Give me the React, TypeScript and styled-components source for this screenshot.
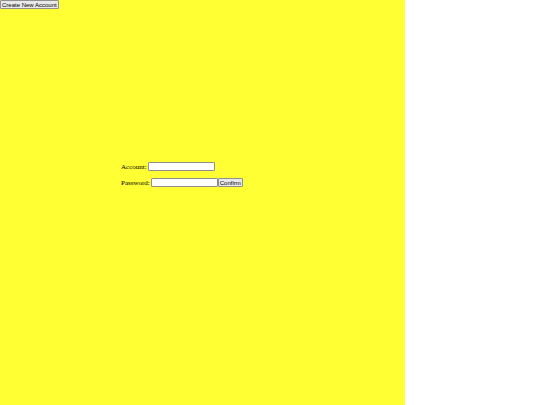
import * as React from 'react';
import styled, { createGlobalStyle } from 'styled-components';

const GlobalStyle = createGlobalStyle`
    html, body {
        margin: 0;
        padding: 0;
        background: #ffffff;
    }
`;

const Page = styled.div`
    width: 405px;
    height: 405px;
    background: #ffff33;
    display: flex;
    flex-direction: column;
    align-items: flex-start;
`;

const SmallButton = styled.button`
    box-sizing: border-box;
    height: 9px;
    margin: 0;
    padding: 0 1px;
    font-family: "Liberation Sans", Arial, sans-serif;
    font-size: 6px;
    line-height: 1;
    color: #000000;
    background: #e9e9e9;
    border: 1px solid #8f8f8f;
    border-radius: 1px;
`;

const Form = styled.div`
    margin-top: 153px;
    padding-left: 121px;
    display: flex;
    flex-direction: column;
    gap: 7px;
`;

const Row = styled.div`
    display: flex;
    align-items: center;
`;

const Label = styled.label`
    margin-right: 1px;
    font-family: "Liberation Serif", "Times New Roman", serif;
    font-size: 7px;
    color: #000000;
`;

const Field = styled.input`
    box-sizing: border-box;
    width: 67px;
    height: 9px;
    margin: 0;
    padding: 0 1px;
    font-size: 6px;
    background: #ffffff;
    border: 1px solid #8f8f8f;
    border-radius: 1px;
`;

export default function App() {
    return (
        <>
            <GlobalStyle />
            <Page>
                <SmallButton>Create New Account</SmallButton>
                <Form>
                    <Row>
                        <Label>Account:</Label>
                        <Field type="text" />
                    </Row>
                    <Row>
                        <Label>Password:</Label>
                        <Field type="password" />
                        <SmallButton>Confirm</SmallButton>
                    </Row>
                </Form>
            </Page>
        </>
    );
}
